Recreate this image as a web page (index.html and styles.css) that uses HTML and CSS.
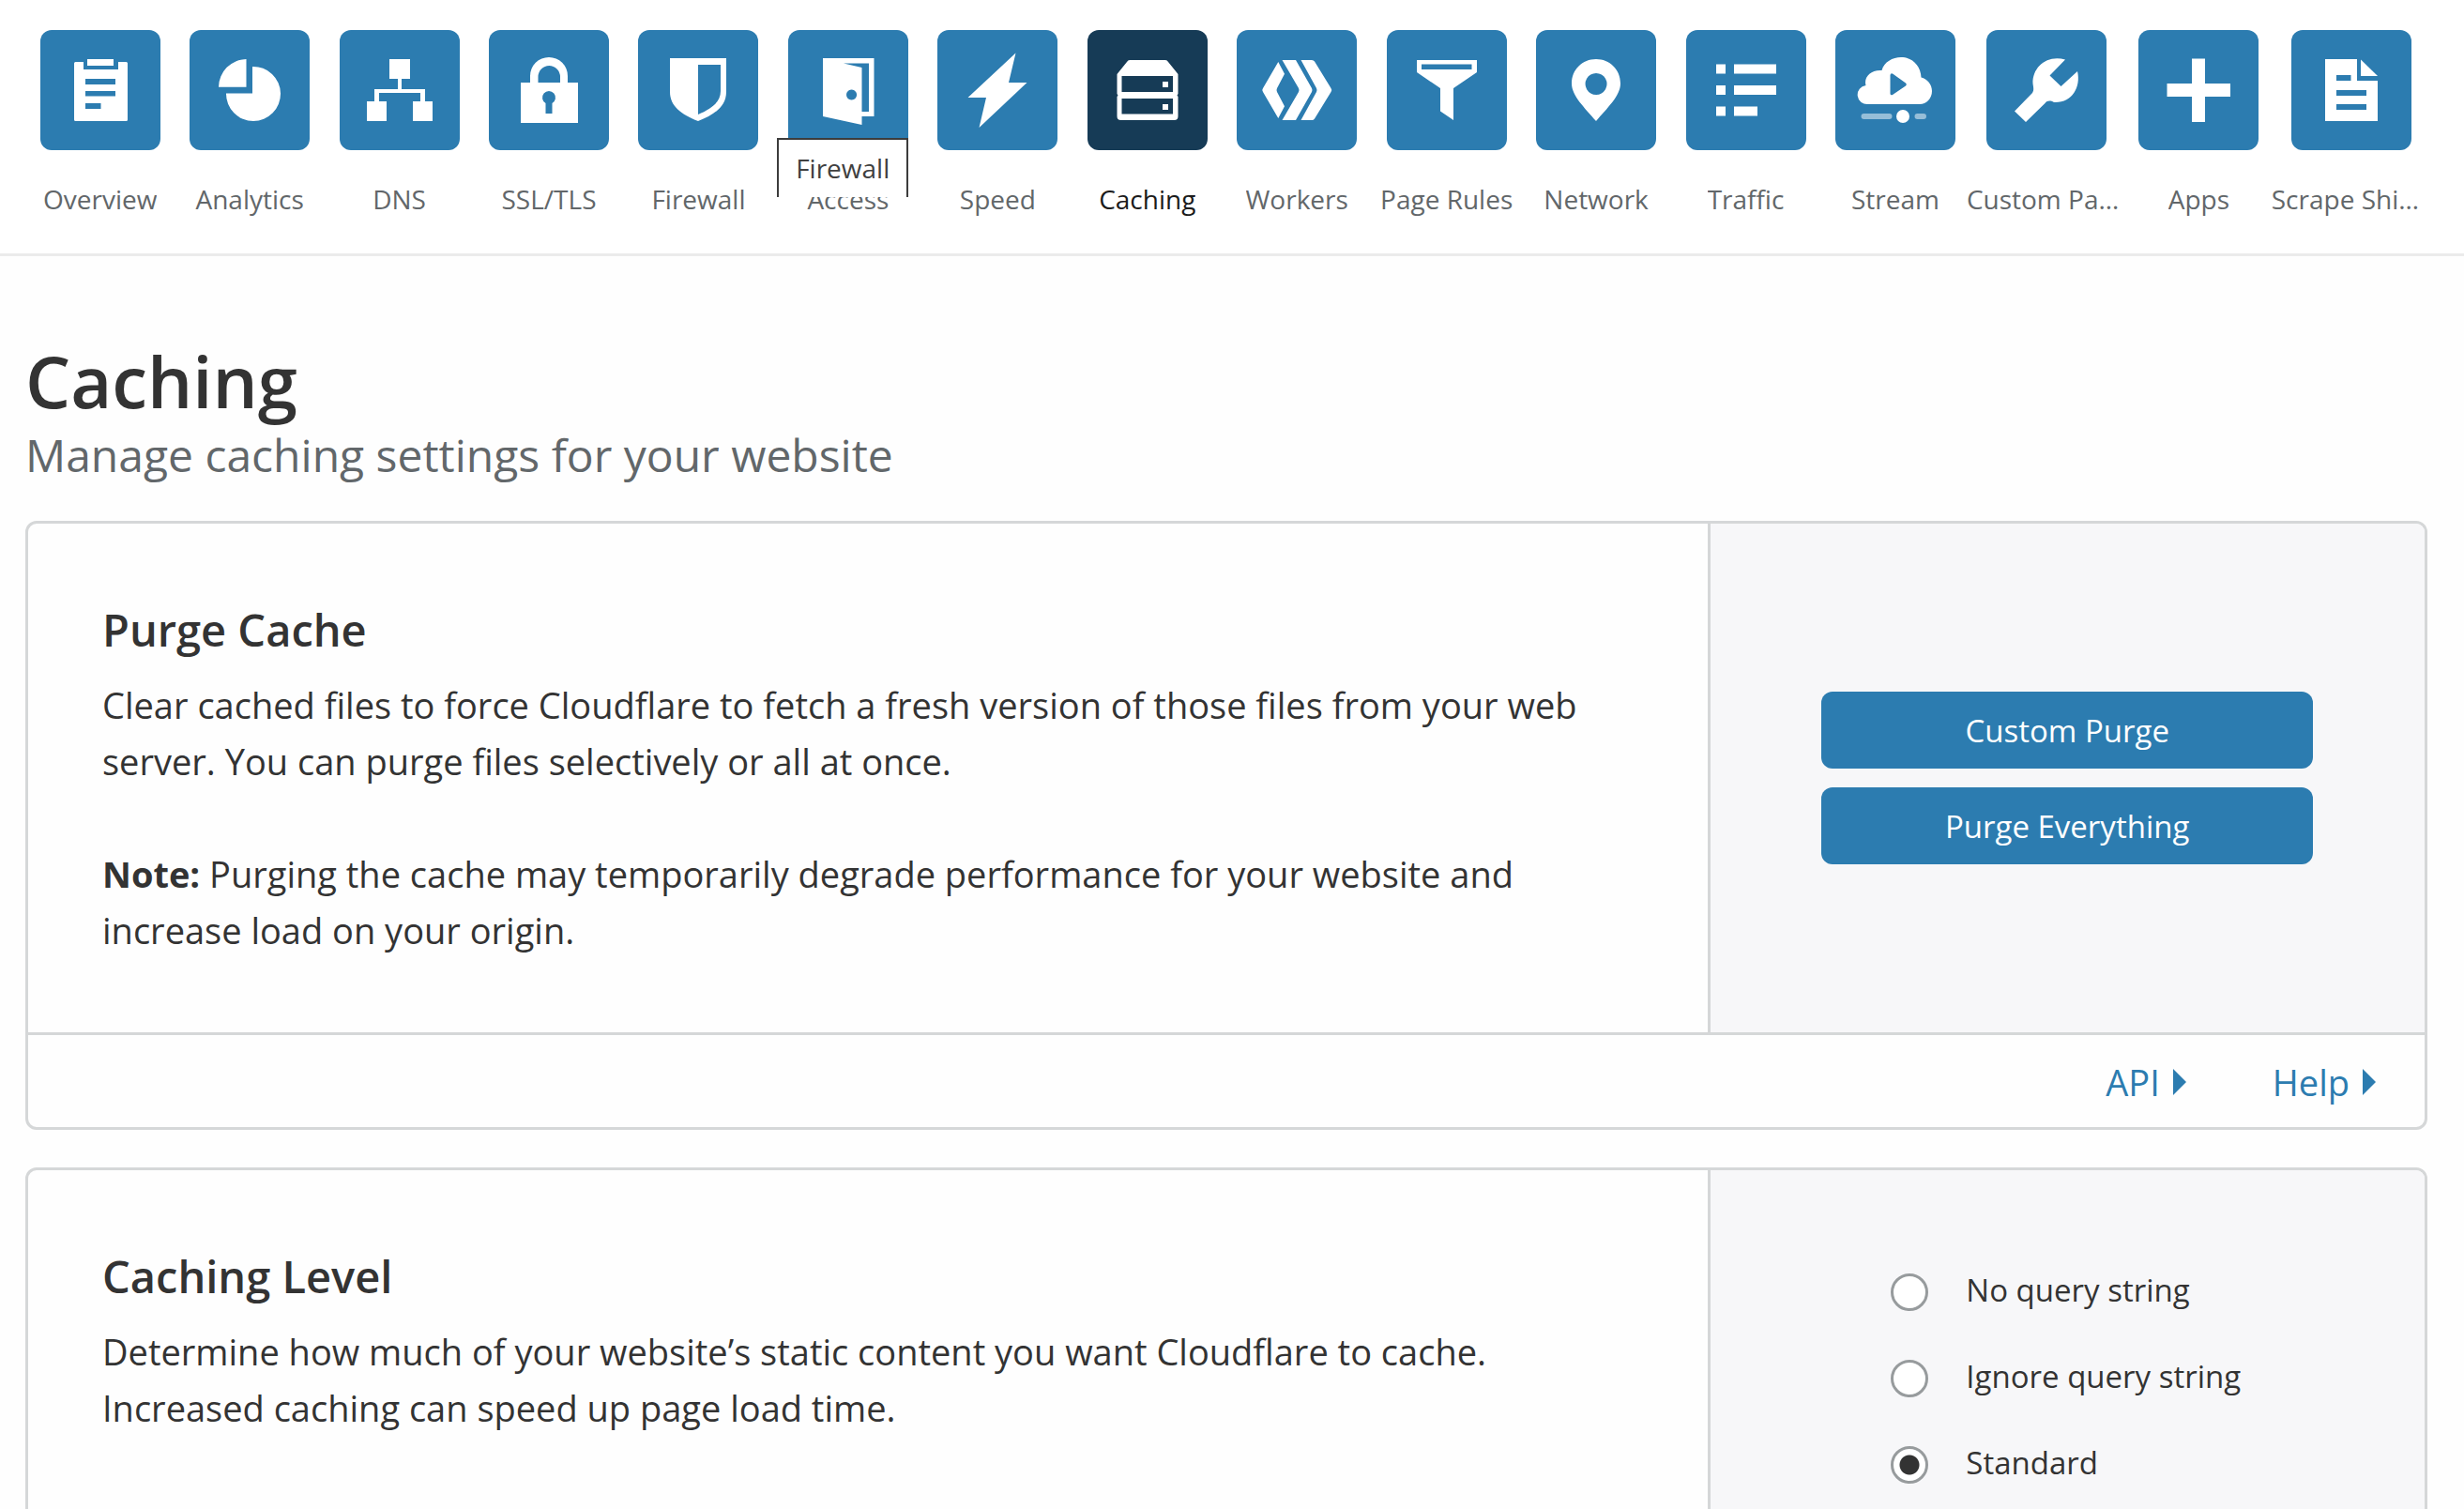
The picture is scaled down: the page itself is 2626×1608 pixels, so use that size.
FILE: index.html
```html
<!DOCTYPE html>
<html lang="en">
<head>
<meta charset="utf-8">
<meta name="viewport" content="width=device-width, initial-scale=1">
<title>Caching</title>
<link rel="stylesheet" href="styles.css">
</head>
<body>
<nav class="app-nav" aria-label="Apps">
  <a class="app" href="#overview">
    <svg class="app-icon" viewBox="0 0 128 128" aria-hidden="true"><path fill-rule="evenodd" d="M37 34h9v8h37v-8h8.500q1.500 0 1.500 1.500v60q0 1.500-1.500 1.500h-54q-1.500 0-1.500-1.500v-60q0-1.500 1.500-1.500zM48 52v6h32v-6zM48 65v5.500h32V65zM48 78v6h16.500v-6z"/><path d="M50 31h28v7H50z"/></svg>
    <span class="app-label">Overview</span>
  </a>
  <a class="app" href="#analytics">
    <svg class="app-icon" viewBox="0 0 128 128" aria-hidden="true"><path d="M60.500 31v29.700H31A30 30 0 0 1 60.500 31zM67 39a29 29 0 1 1-28 28.500h28z"/></svg>
    <span class="app-label">Analytics</span>
  </a>
  <a class="app" href="#dns">
    <svg class="app-icon" viewBox="0 0 128 128" aria-hidden="true"><path d="M53 31h22v21h-9v11h25v13h8v21H78V76h8v-9H42v9h8v21H29V76h8V63h25V52h-9z"/></svg>
    <span class="app-label">DNS</span>
  </a>
  <a class="app" href="#ssl-tls">
    <svg class="app-icon" viewBox="0 0 128 128" aria-hidden="true"><path fill-rule="evenodd" d="M34 56h10v-7a20 20 0 0 1 40 0v7h11v43H34zM52.500 56H76v-6a11.750 12 0 0 0-23.500 0zM60.500 78v11h7V78a7 7 0 1 0-7 0z"/></svg>
    <span class="app-label">SSL/TLS</span>
  </a>
  <a class="app" href="#firewall">
    <svg class="app-icon" viewBox="0 0 128 128" aria-hidden="true"><path fill-rule="evenodd" d="M34 30h60v36c0 15-12 24-30 31-18-7-30-16-30-31zM64 37v53c14-6 24-13 24-25V37z"/></svg>
    <span class="app-label">Firewall</span>
  </a>
  <a class="app" href="#access">
    <svg class="app-icon" viewBox="0 0 128 128" aria-hidden="true"><path fill-rule="evenodd" d="M37 30h54.500v62H78.500v9L37 92zM59 35.500L78.500 40v47H86V35.500zM67.500 63.500a5.500 5.500 0 1 0 .1 0z"/></svg>
    <span class="app-label">Access</span>
    <span class="tooltip" role="tooltip">Firewall</span>
  </a>
  <a class="app" href="#speed">
    <svg class="app-icon" viewBox="0 0 128 128" aria-hidden="true"><path d="M83.500 24.500L76 56h19.500l-51 48L52 72H32.500z"/></svg>
    <span class="app-label">Speed</span>
  </a>
  <a class="app app-current" href="#caching" aria-current="page">
    <svg class="app-icon" viewBox="0 0 128 128" aria-hidden="true"><path fill-rule="evenodd" d="M45 32h38q2 0 3 2l10.500 13v21l-1 1.500 1 1.500v21q0 4-4 4H35.500q-4 0-4-4V71l1-1.500-1-1.500V47L42 34q1-2 3-2zM36.500 49v17H91V49zM36.500 73v16.500H91V73zM80 55h6v6h-6zM80 79h6v6h-6z"/></svg>
    <span class="app-label">Caching</span>
  </a>
  <a class="app" href="#workers">
    <svg class="app-icon" viewBox="0 0 128 128" aria-hidden="true"><path d="M44.300 34l6.700 12.700-8 15.300q-1 2 0 4l8 15.300L44.300 94 28 66q-1.500-2 0-4zM48.500 32H63l17 30q1 2 0 4L63 96H48.500L66 66q1-2 0-4zM68.500 32H80q2 0 3 1.500L100.500 62q1.500 2 0 4L83 94.500Q82 96 80 96H68.500L85 66q1-2 0-4z"/></svg>
    <span class="app-label">Workers</span>
  </a>
  <a class="app" href="#page-rules">
    <svg class="app-icon" viewBox="0 0 128 128" aria-hidden="true"><path fill-rule="evenodd" d="M32 32h64v13L71 62v34l-14-9.500V62L32 45zM37 36.500V42h53.500v-5.500z"/></svg>
    <span class="app-label">Page Rules</span>
  </a>
  <a class="app" href="#network">
    <svg class="app-icon" viewBox="0 0 128 128" aria-hidden="true"><path fill-rule="evenodd" d="M64 31c14.500 0 26 11 26 26 0 13-14 26-26 40-12-14-26-27-26-40 0-15 11.500-26 26-26zM64 46a11.500 11.500 0 1 0 .1 0z"/></svg>
    <span class="app-label">Network</span>
  </a>
  <a class="app" href="#traffic">
    <svg class="app-icon" viewBox="0 0 128 128" aria-hidden="true"><path d="M32 36.500h10v10H32zM51 36.500h45v10H51zM32 59h10v10H32zM51 59h45v10H51zM32 81.500h10v10H32zM51 81.500h25v10H51z"/></svg>
    <span class="app-label">Traffic</span>
  </a>
  <a class="app" href="#stream">
    <svg class="app-icon" viewBox="0 0 128 128" aria-hidden="true"><path fill-rule="evenodd" d="M35 79a10 10 0 0 1-2.500-20C30 50 38 42 49.500 43 52 34 61 29 70 29c12 0 21 9 21.500 21.500C98 52 103 58 103 65c0 8-6 14-13 14zM58.500 48v20q.5 2 2.500 1l14-9.500q1.500-1.500 0-3L61 46.500q-2-1-2.500 1.500z"/><circle cx="72" cy="92" r="7"/><path opacity=".5" d="M30.500 89h27a3 3 0 0 1 0 6h-27a3 3 0 0 1 0-6zM87.500 89H94a3 3 0 0 1 0 6h-6.500a3 3 0 0 1 0-6z"/></svg>
    <span class="app-label">Stream</span>
  </a>
  <a class="app" href="#custom-pages">
    <svg class="app-icon" viewBox="0 0 128 128" aria-hidden="true"><path d="M84 31.500L67.500 48.500 79.500 60 97 44c4 17-6 34-25 33-4-2-7-2-9.500 1L42 98 30 86.500 49 67c2-3 1-6 .5-10C49 39 65 26 84 31.500z"/></svg>
    <span class="app-label">Custom Pages</span>
  </a>
  <a class="app" href="#apps">
    <svg class="app-icon" viewBox="0 0 128 128" aria-hidden="true"><path d="M57 30.500h14V57h27v14H71v27H57V71H30.500V57H57z"/></svg>
    <span class="app-label">Apps</span>
  </a>
  <a class="app" href="#scrape-shield">
    <svg class="app-icon" viewBox="0 0 128 128" aria-hidden="true"><path fill-rule="evenodd" d="M36 31h34v23h22v43H36zM48 48v6h15.500v-6zM48 64v6h32v-6zM48 79v6h32v-6z"/><path d="M74 31.500L92 49H74z"/></svg>
    <span class="app-label">Scrape Shield</span>
  </a>
</nav>

<main class="page">
  <header class="page-header">
    <h1 class="page-title">Caching</h1>
    <p class="page-subtitle">Manage caching settings for your website</p>
  </header>

  <section class="card" aria-labelledby="purge-title">
    <div class="card-body">
      <div class="card-content">
        <h2 class="card-title" id="purge-title">Purge Cache</h2>
        <p class="card-text">Clear cached files to force Cloudflare to fetch a fresh version of those files from your web server. You can purge files selectively or all at once.</p>
        <p class="card-text"><strong>Note:</strong> Purging the cache may temporarily degrade performance for your website and increase load on your origin.</p>
      </div>
      <div class="card-control card-actions">
        <button class="button" type="button">Custom Purge</button>
        <button class="button" type="button">Purge Everything</button>
      </div>
    </div>
    <footer class="card-footer">
      <a class="footer-link" href="#api">API <svg class="caret" viewBox="0 0 14 28" aria-hidden="true"><path d="M0 0L14 14 0 28z"/></svg></a>
      <a class="footer-link" href="#help">Help <svg class="caret" viewBox="0 0 14 28" aria-hidden="true"><path d="M0 0L14 14 0 28z"/></svg></a>
    </footer>
  </section>

  <section class="card" aria-labelledby="level-title">
    <div class="card-body">
      <div class="card-content">
        <h2 class="card-title" id="level-title">Caching Level</h2>
        <p class="card-text">Determine how much of your website’s static content you want Cloudflare to cache. Increased caching can speed up page load time.</p>
      </div>
      <div class="card-control card-options" role="radiogroup" aria-labelledby="level-title">
        <label class="option"><input class="radio" type="radio" name="level"><span>No query string</span></label>
        <label class="option"><input class="radio" type="radio" name="level"><span>Ignore query string</span></label>
        <label class="option"><input class="radio" type="radio" name="level" checked><span>Standard</span></label>
      </div>
    </div>
  </section>
</main>
</body>
</html>
```
FILE: styles.css
```css
* {
  box-sizing: border-box;
}

body {
  margin: 0;
  background: #fefefe;
  color: #333;
  font-family: "Open Sans", "Noto Sans", sans-serif;
  font-size: 38px;
  line-height: 60px;
}

h1,
h2,
p {
  margin: 0;
}

a {
  color: #2c7cb0;
  text-decoration: none;
}

/* App navigation */
.app-nav {
  display: grid;
  grid-template-columns: repeat(13, minmax(0, 159fr)) repeat(3, minmax(0, 162fr));
  padding: 32px 39px 38px 27px;
  border-bottom: 3px solid #ebebeb;
  background: #fff;
}

.app {
  position: relative;
  display: flex;
  flex-direction: column;
  align-items: center;
  gap: 32px;
  color: #62676a;
  font-size: 28px;
  line-height: 40px;
}

.app-icon {
  width: 128px;
  height: 128px;
  border-radius: 12px;
  background: #2c7cb0;
  fill: #fff;
}

.app-label {
  max-width: 170px;
  overflow: hidden;
  text-overflow: ellipsis;
  white-space: nowrap;
}

.app-current {
  color: #1b1b1b;
}

.app-current .app-icon {
  background: #163b56;
}

.tooltip {
  position: absolute;
  top: 115px;
  left: 4px;
  width: 140px;
  height: 63px;
  padding-top: 10px;
  border: 2px solid #3c3c3c;
  border-bottom: 0;
  background: #fff;
  color: #404040;
  text-align: center;
}

/* Page */
.page {
  display: flex;
  flex-direction: column;
  gap: 40px;
  padding: 88px 39px 40px 27px;
}

.page-header {
  margin-bottom: -4px;
}

.page-title {
  font-size: 76px;
  font-weight: 600;
  line-height: 90px;
}

.page-subtitle {
  color: #62676a;
  font-size: 48px;
  line-height: 68px;
}

/* Cards */
.card {
  overflow: hidden;
  border: 3px solid #d5d7d8;
  border-radius: 12px;
  background: #fefefe;
}

.card-body {
  display: grid;
  grid-template-columns: minmax(0, 701fr) minmax(0, 299fr);
}

.card-content {
  padding: 83px 79px 79px;
}

.card-title {
  margin-bottom: 20px;
  font-size: 47px;
  font-weight: 600;
  line-height: 60px;
}

.card-text + .card-text {
  margin-top: 60px;
}

.card-control {
  display: flex;
  flex-direction: column;
  border-left: 3px solid #d5d7d8;
  background: #f7f7f9;
}

.card-actions {
  justify-content: center;
  gap: 20px;
  padding: 0 119px 0 118px;
}

.card-options {
  gap: 48px;
  padding: 106px 119px 106px 192px;
}

.button {
  height: 82px;
  border: 0;
  border-radius: 12px;
  background: #2c7cb0;
  color: #fff;
  font-family: inherit;
  font-size: 33px;
}

.option {
  display: flex;
  align-items: flex-end;
  gap: 40px;
  font-size: 33px;
  line-height: 44px;
}

.radio {
  flex: none;
  width: 40px;
  height: 40px;
  margin: 0;
  border: 3px solid #979b9d;
  border-radius: 50%;
  appearance: none;
  background: #fff;
}

.radio:checked {
  background: radial-gradient(circle, #333 10px, #fff 11px);
}

.card-footer {
  display: flex;
  justify-content: flex-end;
  gap: 92px;
  padding: 20px 52px 18px;
  border-top: 3px solid #d5d7d8;
}

.footer-link {
  display: flex;
  align-items: center;
  gap: 14px;
}

.caret {
  width: 14px;
  height: 28px;
  fill: #2c7cb0;
}
```
